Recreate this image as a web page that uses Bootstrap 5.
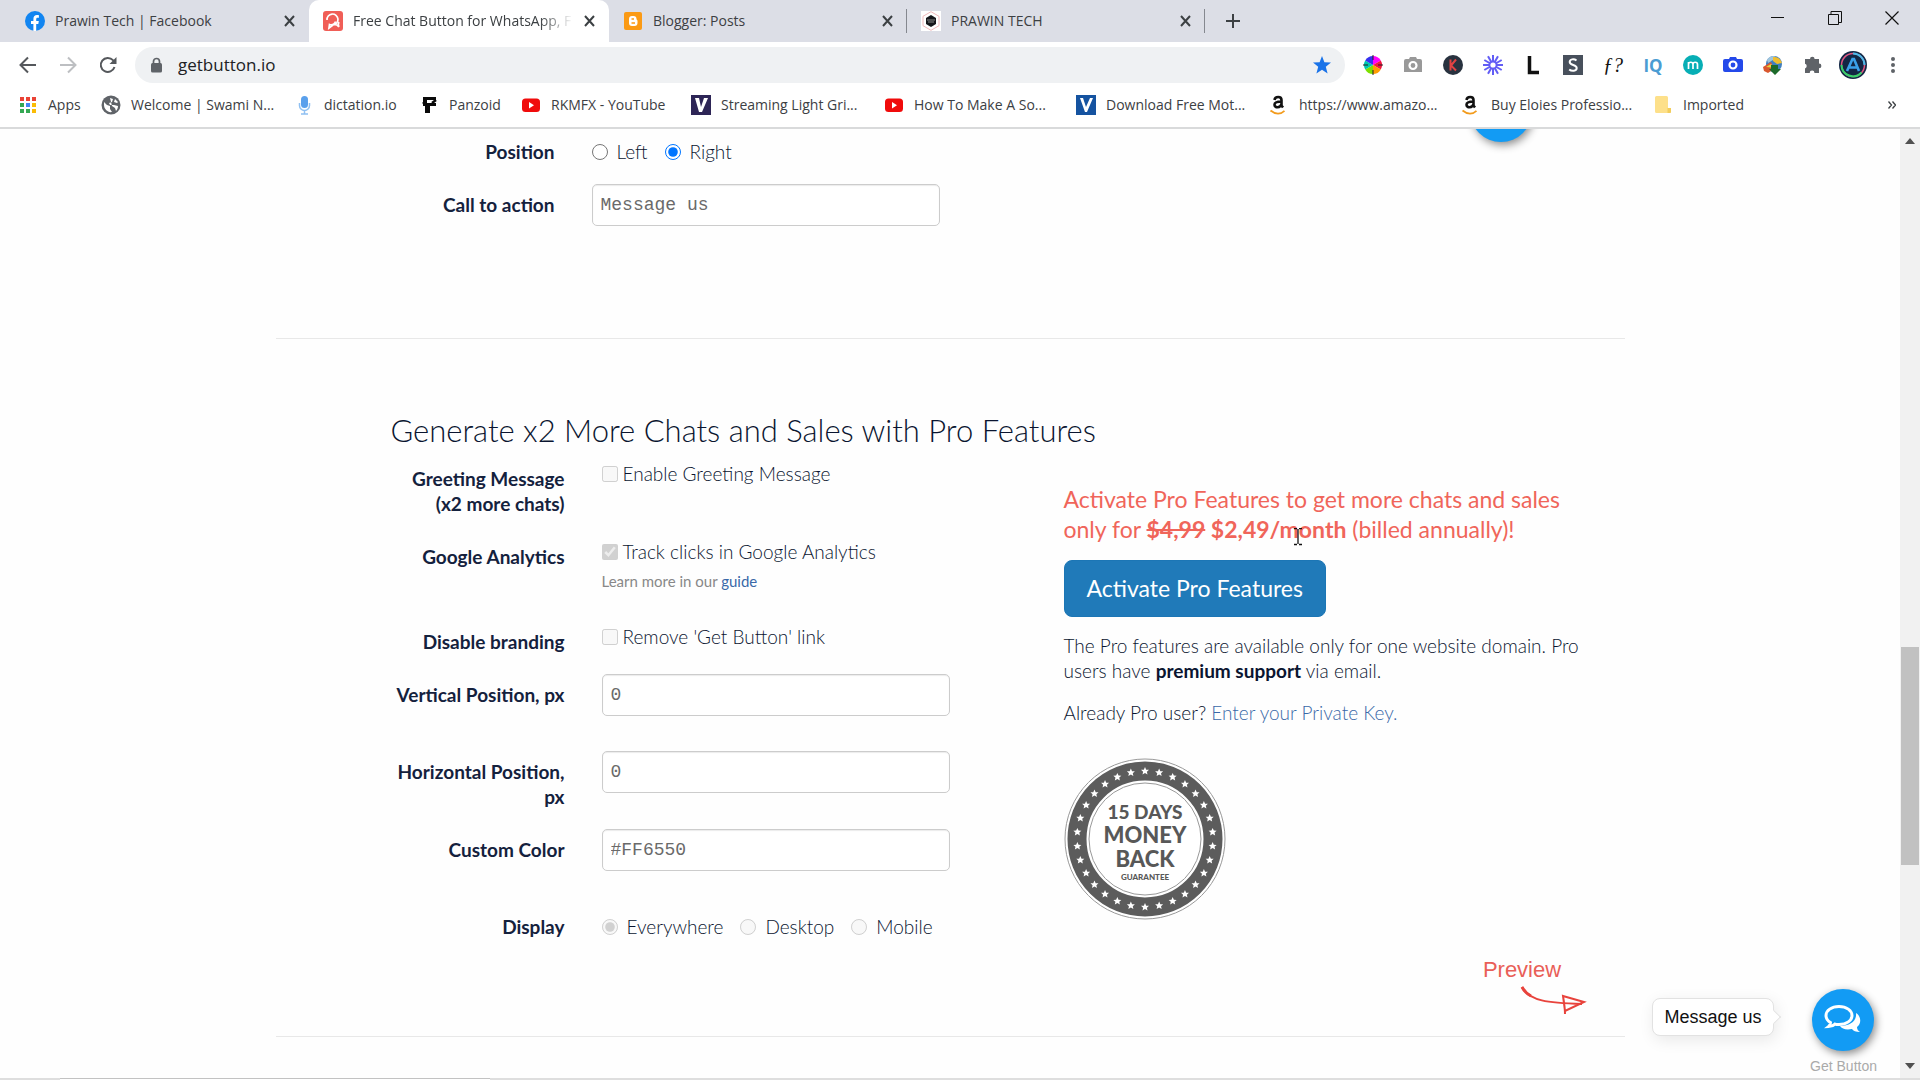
<!DOCTYPE html>
<html lang="en">
<head>
<meta charset="utf-8">
<meta name="viewport" content="width=device-width, initial-scale=1">
<title>Free Chat Button for WhatsApp</title>
<link href="https://cdn.jsdelivr.net/npm/bootstrap@5.3.0/dist/css/bootstrap.min.css" rel="stylesheet">
<style>
body{font-family:Lato,"Liberation Sans",sans-serif;font-size:19px;font-weight:300;line-height:25px;color:#0a1530;background:#fefefe}
svg{display:block;flex:none}
.browser{height:100vh;overflow:hidden}
.ui-font{font-family:"Open Sans","Noto Sans",sans-serif;font-size:14px;font-weight:400;line-height:20px;color:#3c4043}
.tabstrip{height:42px;background:#dcdee6;display:grid;grid-template-columns:309px 300px 298px 298px 56px 1fr auto}
.tabitem{gap:10px;padding:0 13px 0 14px;white-space:nowrap}
.tabitem.first{padding-left:25px}
.tabitem.current{background:#fff;border-radius:10px 10px 0 0}
.tabitem .ttl{flex:1;overflow:hidden;color:#3c4043}
.tabitem.current .ttl{-webkit-mask-image:linear-gradient(90deg,#000 85%,transparent)}
.split{background:linear-gradient(#85888f,#85888f) right center/1px 24px no-repeat}
.iconbtn{border:0;background:none;padding:0;display:flex;align-items:center;justify-content:center}
.winbtns .iconbtn{width:57px;height:36px}
.toolbar{height:44px;padding:5px 7px 3px 8px;background:#fff;display:grid;grid-template-columns:127px 1fr auto}
.navbtns .iconbtn{width:40px;height:36px}
.address{background:#eff1f3;border-radius:18px;padding:0 14px;height:36px;gap:15px}
.address input{border:0;background:none;font-size:17px;color:#202124;flex:1;outline:0;padding:0;min-width:0;font-family:inherit}
.exts{padding-left:8px}
.exts .iconbtn{width:40px;height:36px}
.bookmarks{height:41px;background:#fff;display:grid;grid-template-columns:83px 193px 125px 102px 170px 193px 192px 193px 192px 192px 1fr 24px;padding:0 16px 4px 18px;white-space:nowrap;align-items:center}
.bookmarks a{display:flex;align-items:center;gap:10px;color:#3c4043;text-decoration:none}
.bookmarks a svg{width:20px;height:20px}
.edge{height:2px;background:#d9dadb}
.viewport{flex:1;min-height:0;position:relative}
.scrollbar{width:20px;background:#f1f1f1}
.track{flex:1;padding:0 1px}
.before-thumb{flex:497}.thumb{flex:219;background:#c1c1c1}.after-thumb{flex:190}
.page-area{flex:1;min-width:0;position:relative;overflow:hidden}
.wrapbox{width:71%;min-width:1200px;margin:0 auto}
.rule{border:0;border-top:1px solid #e8e8e8;opacity:1;margin:0}
.top-form{padding:2px 0 0 104px;height:209px}
.pro{padding:73px 0 97px 114px}
.pro h2{font-size:31px;line-height:36px;font-weight:300;margin:0 0 10px;padding-left:1px;white-space:nowrap}
.frow{display:flex;gap:37px;margin-bottom:20px}
.frow .lab{width:175px;padding-top:8px;text-align:right;font-weight:700;flex:none;color:#14213d;white-space:nowrap}
.fieldbox{min-height:33px}
.fieldbox.tall{min-height:57px}
.fieldbox.noted{min-height:65px}
.frow input[type=text]{width:348px;height:42px;border:1px solid #ccc;border-radius:5px;padding:0 8px;font-family:"Liberation Mono",monospace;font-size:18px;line-height:25px;color:#6a6a6a;background:#fff;box-shadow:inset 0 1px 1px rgba(0,0,0,.08)}
.checkline{display:flex;align-items:center;gap:5px;padding-top:3px}
.checkline input,.radioline input{width:16px;height:16px;margin:0}
.radioline{display:flex;align-items:center;gap:17px;padding-top:8px}
.radioline label{display:flex;align-items:center;gap:9px}
.hint{font-size:15px;font-weight:400;line-height:20px;color:#888;padding-top:7px}
a.plain{color:#3a69a8;text-decoration:none}
.offer{padding-top:26px;margin-left:114px;width:520px;flex:none}
.offer .pitch{font-size:23px;font-weight:400;line-height:30px;color:#f0655a;margin-bottom:16px;white-space:nowrap}
.btn-pro{background:#207ab9;color:#fff;font-size:23px;line-height:31px;padding:12px 22px;border:1px solid #1c76b5;border-radius:8px}
.btn-pro:hover{background:#1b6ca5;color:#fff}
.offer p{margin:0 0 17px;white-space:nowrap}
.offer b{font-weight:700}
.seal{margin-top:32px}
.arial{font-family:"Liberation Sans",Arial,sans-serif;font-weight:400}
.preview{position:absolute;right:347px;bottom:61px;color:#e95f58;font-size:22px;line-height:26px;width:102px}
.preview svg{margin:2px 0 0 49px}
.bubble{position:absolute;right:146px;bottom:42px;width:122px;height:38px;border:1px solid #e2e2e2;border-radius:8px;background:#fff;color:#111;text-align:center;line-height:36px;font-size:18px;box-shadow:2px 4px 16px rgba(0,0,0,.09)}
.bubble::after{content:"";position:absolute;right:-6px;top:13px;width:10px;height:10px;background:#fff;border:1px solid #e2e2e2;border-left:0;border-bottom:0;transform:rotate(45deg)}
.chat{position:absolute;right:46px;bottom:27px;width:62px;height:62px;border-radius:50%;background:#129bf4;border:0;padding:0;display:flex;align-items:center;justify-content:center;box-shadow:2px 3px 8px rgba(0,0,0,.45)}
.brand{position:absolute;right:43px;bottom:2px;color:#aaa;font-size:14px;line-height:20px;text-decoration:none}
.topball{position:absolute;right:368px;top:-49px;width:62px;height:62px;border-radius:50%;background:#129bf4;box-shadow:2px 3px 8px rgba(0,0,0,.45)}
.pointer{position:absolute;left:1292px;top:399px}
.foot{height:2px;background:#dedede}
.foot div{width:430px;margin-left:60px;height:2px;border-top:1px solid #c2c2c2;background:#fff}
.glyph-f{font:italic 20px "Liberation Serif",serif;color:#111}
.glyph-iq{font:700 17px "Open Sans",sans-serif;color:#4b9cd3}
</style>
<script src="https://cdn.jsdelivr.net/npm/bootstrap@5.3.0/dist/js/bootstrap.bundle.min.js"></script>
</head>
<body>
<div class="browser d-flex flex-column">
<header class="ui-font">
 <div class="tabstrip">
  <div class="tabitem first d-flex align-items-center"><svg width="20" height="20" viewBox="0 0 20 20"><circle cx="10" cy="10" r="10" fill="#1285f1"/><path d="M8.400 20v-7H6v-3h2.400V7.900c0-2.500 1.400-3.800 3.600-3.800 1 0 1.900.2 1.900.2v2.500h-1.200c-1.200 0-1.500.7-1.500 1.500V10h2.600l-.5 3h-2.100v7z" fill="#fff"/></svg><span class="ttl">Prawin Tech | Facebook</span><button class="iconbtn" aria-label="Close tab"><svg width="13" height="12" viewBox="0 0 13 12"><path d="M2 1l9 10M11 1L2 11" stroke="#3c4043" stroke-width="2"/></svg></button></div>
  <div class="tabitem current d-flex align-items-center"><svg width="20" height="20" viewBox="0 0 20 20"><rect width="20" height="20" rx="3" fill="#f05e57"/><path d="M4 9a5.500 5.500 0 1 1 6 5l-4 3 .5-3.500c2.500 1 6-.5 5.800-3M11 13.500c2 0 3.800.5 5 2.500-1-2-1-3.500 0-5" fill="none" stroke="#fff" stroke-width="1.700"/></svg><span class="ttl">Free Chat Button for WhatsApp, F</span><button class="iconbtn" aria-label="Close tab"><svg width="13" height="12" viewBox="0 0 13 12"><path d="M2 1l9 10M11 1L2 11" stroke="#3c4043" stroke-width="2"/></svg></button></div>
  <div class="tabitem split d-flex align-items-center"><svg width="20" height="20" viewBox="0 0 20 20"><rect x="1" y="1" width="18" height="18" rx="2" fill="#fb9a14"/><path d="M6 8a3 3 0 0 1 3-3h1.500a3 3 0 0 1 3 3c0 1 1 .8 1 2v2a3 3 0 0 1-3 3H9a3 3 0 0 1-3-3z" fill="#fff"/><path d="M8.500 8H11M8.500 12h3.500" stroke="#fb9a14" stroke-width="1.400"/></svg><span class="ttl">Blogger: Posts</span><button class="iconbtn" aria-label="Close tab"><svg width="13" height="12" viewBox="0 0 13 12"><path d="M2 1l9 10M11 1L2 11" stroke="#3c4043" stroke-width="2"/></svg></button></div>
  <div class="tabitem split d-flex align-items-center"><svg width="20" height="20" viewBox="0 0 20 20"><rect width="20" height="20" fill="#fff"/><path d="M10 .7l8 4.600v9.400l-8 4.600-8-4.600V5.300z" fill="none" stroke="#f0b9bb"/><path d="M10 4l5 3v6l-5 3-5-3V7z" fill="#15171b"/><path d="M6 9h8M7 11h6" stroke="#888"/></svg><span class="ttl">PRAWIN TECH</span><button class="iconbtn" aria-label="Close tab"><svg width="13" height="12" viewBox="0 0 13 12"><path d="M2 1l9 10M11 1L2 11" stroke="#3c4043" stroke-width="2"/></svg></button></div>
  <button class="iconbtn" aria-label="New tab"><svg width="16" height="16" viewBox="0 0 16 16"><path d="M8 1v14M1 8h14" stroke="#3c4043" stroke-width="2"/></svg></button>
  <span></span>
  <div class="winbtns d-flex">
   <button class="iconbtn" aria-label="Minimize"><svg width="14" height="14" viewBox="0 0 14 14"><path d="M0 6.500h13" stroke="#111" stroke-width="1"/></svg></button>
   <button class="iconbtn" aria-label="Restore"><svg width="14" height="14" viewBox="0 0 14 14"><path d="M.5 3.500h10v10H.5zM3 3V.5h10.500v11H11" fill="none" stroke="#111"/></svg></button>
   <button class="iconbtn" aria-label="Close"><svg width="14" height="14" viewBox="0 0 14 14"><path d="M.5.5l13 13M13.500.5l-13 13" stroke="#111" stroke-width="1.200"/></svg></button>
  </div>
 </div>
 <div class="toolbar">
  <div class="navbtns d-flex">
   <button class="iconbtn" aria-label="Back"><svg width="18" height="18" viewBox="0 0 18 18"><path d="M17 9H2M9 1.500L1.500 9 9 16.500" fill="none" stroke="#55585c" stroke-width="2"/></svg></button>
   <button class="iconbtn" aria-label="Forward"><svg width="18" height="18" viewBox="0 0 18 18"><path d="M1 9h15M9 1.500L16.500 9 9 16.500" fill="none" stroke="#bdbfc2" stroke-width="2"/></svg></button>
   <button class="iconbtn" aria-label="Reload"><svg width="18" height="18" viewBox="0 0 18 18"><path d="M15.500 11A7 7 0 1 1 14 4.200L16 6" fill="none" stroke="#55585c" stroke-width="2"/><path d="M17.500 1v7h-7z" fill="#55585c"/></svg></button>
  </div>
  <div class="address d-flex align-items-center"><svg width="14" height="16" viewBox="0 0 14 16"><rect x="2" y="6" width="11" height="9.500" rx="1.500" fill="#5f6368"/><path d="M4.500 7V4.500a3 3 0 0 1 6 0V7" fill="none" stroke="#5f6368" stroke-width="1.700"/></svg><input type="text" aria-label="Address" value="getbutton.io"><svg width="18" height="18" viewBox="0 0 18 18"><path d="M9 0l2.400 6.300 6.600.3-5.200 4.200L14.600 17.500 9 13.700 3.400 17.500l1.800-6.700L0 6.600l6.600-.3z" fill="#1a73e8"/></svg></div>
  <div class="exts d-flex">
   <button class="iconbtn" aria-label="Color picker"><svg width="20" height="20" viewBox="0 0 20 20"><path d="M10 10L10 1A9 9 0 0 1 17.800 5.500z" fill="#f0f"/><path d="M10 10L17.800 5.500A9 9 0 0 1 17.800 14.500z" fill="#f01840"/><path d="M10 10L17.800 14.500A9 9 0 0 1 10 19z" fill="#ff9d00"/><path d="M10 10V19A9 9 0 0 1 2.200 14.500z" fill="#7de000"/><path d="M10 10L2.200 14.500A9 9 0 0 1 2.200 5.500z" fill="#00c8b0"/><path d="M10 10L2.200 5.500A9 9 0 0 1 10 1z" fill="#3530f0"/><path d="M10 0v5M10 15v5M0 10h5M15 10h5" stroke="#222"/></svg></button>
   <button class="iconbtn" aria-label="Screenshot"><svg width="20" height="20" viewBox="0 0 20 20"><path d="M3 4h3l1-2h6l1 2h3a2 2 0 0 1 2 2v11H1V6a2 2 0 0 1 2-2z" fill="#999"/><circle cx="10" cy="10.500" r="3.500" fill="none" stroke="#fff" stroke-width="2.200"/></svg></button>
   <button class="iconbtn" aria-label="K"><svg width="20" height="20" viewBox="0 0 20 20"><circle cx="10" cy="10" r="10" fill="#28323f"/><path d="M7.500 4.500v11M13 4.500L8 10.500l5 5" fill="none" stroke="#e04343" stroke-width="2"/></svg></button>
   <button class="iconbtn" aria-label="Loom"><svg width="20" height="20" viewBox="0 0 20 20"><g stroke="#625df5" stroke-width="2"><path d="M10 0v20M0 10h20M1.300 5l17.400 10M1.300 15l17.400-10M5 1.300l10 17.400M15 1.300L5 18.700"/></g><circle cx="10" cy="10" r="4.500" fill="#625df5"/><circle cx="10" cy="10" r="2.600" fill="#fff"/></svg></button>
   <button class="iconbtn" aria-label="L"><svg width="20" height="20" viewBox="0 0 20 20"><path d="M6.500 1v16.500H16" fill="none" stroke="#111" stroke-width="3.500"/></svg></button>
   <button class="iconbtn" aria-label="S"><svg width="20" height="20" viewBox="0 0 20 20"><rect width="20" height="20" fill="#48505c"/><path d="M13.500 5.500C11 3.500 6.700 4 6.700 7c0 3.500 7 2.500 7 6 0 3.300-5 3.500-7.500 1.500" fill="none" stroke="#fff" stroke-width="2"/></svg></button>
   <button class="iconbtn" aria-label="WhatFont"><i class="glyph-f">ƒ?</i></button>
   <button class="iconbtn" aria-label="IQ"><b class="glyph-iq">IQ</b></button>
   <button class="iconbtn" aria-label="m"><svg width="20" height="20" viewBox="0 0 20 20"><circle cx="10" cy="10" r="10" fill="#07aeb5"/><path d="M5.500 14V7M5.500 9.500c0-3 4.500-3 4.500 0V14M10 9.500c0-3 4.500-3 4.500 0V14" fill="none" stroke="#fff" stroke-width="1.700"/></svg></button>
   <button class="iconbtn" aria-label="Capture"><svg width="20" height="20" viewBox="0 0 20 20"><path d="M2 4h4l1-2h6l1 2h4a2 2 0 0 1 2 2v9a2 2 0 0 1-2 2H2a2 2 0 0 1-2-2V6a2 2 0 0 1 2-2z" fill="#2449ea"/><circle cx="10" cy="10" r="3.500" fill="none" stroke="#fff" stroke-width="2.200"/></svg></button>
   <button class="iconbtn" aria-label="Download manager"><svg width="20" height="20" viewBox="0 0 20 20"><circle cx="11" cy="9" r="8" fill="#3f7fc0"/><path d="M4 5a8 8 0 0 1 8-4l-2 4-5 3z" fill="#9fc4dc"/><path d="M10 2a8 8 0 0 1 9 6l-5 1-4-3z" fill="#f0bd2d"/><path d="M0 12l8-5 3 7-6 4-4-2z" fill="#d9572e"/><path d="M3 12l5-3 4 4z" fill="#e6d33e"/><path d="M8 10h7v4h3l-6 6-6-6h2z" fill="#1d6a2a"/></svg></button>
   <button class="iconbtn" aria-label="Extensions"><svg width="20" height="20" viewBox="0 0 20 20"><path d="M7 4a2.300 2.300 0 0 1 4.600 0H16v4.500a2.400 2.400 0 0 1 0 4.800V18h-4.500a2.400 2.400 0 0 0-4.800 0H2v-4.600a2.400 2.400 0 0 0 0-4.600V4z" fill="#5f6368"/></svg></button>
   <button class="iconbtn" aria-label="Profile"><svg width="28" height="28" viewBox="0 0 28 28"><circle cx="14" cy="14" r="14" fill="#122644"/><circle cx="14" cy="14" r="11.500" fill="none" stroke="#e05680" stroke-width="1.500"/><path d="M2.500 14a11.500 11.500 0 0 0 20 7.500" fill="none" stroke="#35d06a" stroke-width="2"/><path d="M14 2.500A11.500 11.500 0 0 1 25.500 14" fill="none" stroke="#4db8e8" stroke-width="2"/><path d="M8 20l5.500-12h1.500L20 20M10 16.500h9" fill="none" stroke="#3aa0ea" stroke-width="2.600"/></svg></button>
   <button class="iconbtn" aria-label="Menu"><svg width="6" height="18" viewBox="0 0 6 18"><g fill="#5f6368"><circle cx="3" cy="3" r="2"/><circle cx="3" cy="9" r="2"/><circle cx="3" cy="15" r="2"/></g></svg></button>
  </div>
 </div>
 <nav class="bookmarks" aria-label="Bookmarks">
  <a href="#"><svg viewBox="0 0 20 20"><path fill="#ea4335" d="M2 2h4v4H2zM8 2h4v4H8zM14 2h4v4h-4z"/><path fill="#34a853" d="M2 8h4v4H2zM2 14h4v4H2zM8 14h4v4H8z"/><path fill="#4285f4" d="M8 8h4v4H8z"/><path fill="#fbbc05" d="M14 8h4v4h-4zM14 14h4v4h-4z"/></svg>Apps</a>
  <a href="#"><svg viewBox="0 0 20 20"><circle cx="10" cy="10" r="9.500" fill="#5f6368"/><path d="M3 7l3 3 3 1v3l2 3c-4 1-8-3-8-7zM9 3l3 1-1 3-3 1 1 2h4l4 1c0 2-1 4-2 5l-1-3-3-2M14 4l-1 3 3 1 1-1z" fill="#fff"/></svg>Welcome | Swami N...</a>
  <a href="#"><svg viewBox="0 0 20 20"><rect x="7" y="1" width="7" height="12" rx="3.500" fill="#5aa0ec"/><path d="M5.500 8v2.500a5 5 0 0 0 10 0V8M10.500 15v3.500M7 19h7" stroke="#8fc0f2" stroke-width="1.500" fill="none"/></svg>dictation.io</a>
  <a href="#"><svg viewBox="0 0 20 20"><path d="M4 2h13v3H8v3h9v3h-6v7H6v-7H4z" fill="#0a0a0a"/><path d="M4 7l4 4M17 5l-4 3" stroke="#0a0a0a" stroke-width="2.500"/></svg>Panzoid</a>
  <a href="#"><svg viewBox="0 0 20 20"><rect x="1" y="3.500" width="18" height="13.500" rx="3.500" fill="#f00b0b"/><path d="M8 7l5 3.200-5 3.200z" fill="#fff"/></svg>RKMFX - YouTube</a>
  <a href="#"><svg viewBox="0 0 20 20"><rect width="20" height="20" fill="#2d2556"/><path d="M4 3h4l2 9 3-9h4l-6 14H8z" fill="#fff"/></svg>Streaming Light Gri...</a>
  <a href="#"><svg viewBox="0 0 20 20"><rect x="1" y="3.500" width="18" height="13.500" rx="3.500" fill="#f00b0b"/><path d="M8 7l5 3.200-5 3.200z" fill="#fff"/></svg>How To Make A So...</a>
  <a href="#"><svg viewBox="0 0 20 20"><rect width="20" height="20" fill="#1553a0"/><path d="M4 3h3l3 9 4-9h3l-6 14H9z" fill="#fff"/></svg>Download Free Mot...</a>
  <a href="#"><svg viewBox="0 0 20 20"><path d="M5.500 5c.5-4 7-4 7 0v6.500M12.500 6.500c-4 0-7 .5-7 3.200 0 3.500 6 3.500 7-.7M12 10l2 2.500" fill="none" stroke="#111" stroke-width="2.600"/><path d="M1.500 15.500c5 4 10 4 14 .3" fill="none" stroke="#f29b1d" stroke-width="1.700"/></svg>https://www.amazo...</a>
  <a href="#"><svg viewBox="0 0 20 20"><path d="M5.500 5c.5-4 7-4 7 0v6.500M12.500 6.500c-4 0-7 .5-7 3.200 0 3.500 6 3.500 7-.7M12 10l2 2.500" fill="none" stroke="#111" stroke-width="2.600"/><path d="M1.500 15.500c5 4 10 4 14 .3" fill="none" stroke="#f29b1d" stroke-width="1.700"/></svg>Buy Eloies Professio...</a>
  <a href="#"><svg viewBox="0 0 20 20"><path d="M2 2.500A1.500 1.500 0 0 1 3.500 1h10A1.500 1.500 0 0 1 15 2.500V13h2.500v5H3.500A1.500 1.500 0 0 1 2 16.500z" fill="#fde08a"/><path d="M14.500 13v5H17a1 1 0 0 0 1-1v-4z" fill="#f2cd5c"/></svg>Imported</a>
  <button class="iconbtn" aria-label="More bookmarks"><svg width="8" height="8" viewBox="0 0 8 8"><path d="M.5.500L3.500 4 .5 7.500M4.500.500L7.500 4l-3 3.500" fill="none" stroke="#3c4043" stroke-width="1.300"/></svg></button>
 </nav>
 <div class="edge"></div>
</header>
<div class="viewport d-flex">
 <main class="page-area">
  <div class="wrapbox">
   <form class="top-form">
    <div class="frow"><span class="lab">Position</span><div class="radioline"><label><input type="radio" name="pos"> Left</label><label><input type="radio" name="pos" checked> Right</label></div></div>
    <div class="frow"><label class="lab" for="cta">Call to action</label><div class="fieldbox tall"><input type="text" id="cta" value="Message us"></div></div>
   </form>
   <hr class="rule">
   <section class="pro">
    <h2>Generate x2 More Chats and Sales with Pro Features</h2>
    <div class="d-flex align-items-start">
    <form>
     <div class="frow"><span class="lab">Greeting Message<br>(x2 more chats)</span><div class="fieldbox"><label class="checkline"><input type="checkbox" disabled> Enable Greeting Message</label></div></div>
     <div class="frow"><span class="lab">Google Analytics</span><div class="fieldbox noted"><label class="checkline"><input type="checkbox" checked disabled> Track clicks in Google Analytics</label><div class="hint">Learn more in our <a class="plain" href="#">guide</a></div></div></div>
     <div class="frow"><span class="lab">Disable branding</span><div class="fieldbox"><label class="checkline"><input type="checkbox" disabled> Remove 'Get Button' link</label></div></div>
     <div class="frow"><label class="lab" for="vp">Vertical Position, px</label><div class="fieldbox tall"><input type="text" id="vp" value="0"></div></div>
     <div class="frow"><label class="lab" for="hp">Horizontal Position,<br>px</label><div class="fieldbox tall"><input type="text" id="hp" value="0"></div></div>
     <div class="frow"><label class="lab" for="cc">Custom Color</label><div class="fieldbox tall"><input type="text" id="cc" value="#FF6550"></div></div>
     <div class="frow mb-0"><span class="lab">Display</span><div class="radioline"><label><input type="radio" name="disp" checked disabled> Everywhere</label><label><input type="radio" name="disp" disabled> Desktop</label><label><input type="radio" name="disp" disabled> Mobile</label></div></div>
    </form>
    <div class="offer">
     <div class="pitch">Activate Pro Features to get more chats and sales<br>only for <b><s>$4,99</s> $2,49/month</b> (billed annually)!</div>
     <button class="btn btn-pro" type="button">Activate Pro Features</button>
     <p class="pt-3">The Pro features are available only for one website domain. Pro<br>users have <b>premium support</b> via email.</p>
     <p>Already Pro user? <a class="plain" href="#">Enter your Private Key.</a></p>
     <svg class="seal" width="162" height="164" viewBox="-81 -82 162 164" role="img" aria-label="15 days money back guarantee"><circle r="80" fill="#fff" stroke="#999"/><circle r="68" fill="none" stroke="#5c5c5c" stroke-width="19"/><circle r="56" fill="none" stroke="#999"/><g id="stars" fill="#fff"></g><g fill="#585858" text-anchor="middle" font-weight="900"><text y="-20" font-size="19">15 DAYS</text><text y="4" font-size="22">MONEY</text><text y="28" font-size="22">BACK</text><text y="41" font-size="8">GUARANTEE</text></g></svg>
    </div>
    </div>
   </section>
   <hr class="rule">
  </div>
  <div class="topball"></div>
 </main>
 <div class="scrollbar d-flex flex-column align-items-stretch">
  <button class="iconbtn py-2" aria-label="Scroll up"><svg width="10" height="8" viewBox="0 0 10 8"><path d="M0 7l5-6 5 6z" fill="#505050"/></svg></button>
  <div class="track d-flex flex-column"><div class="before-thumb"></div><div class="thumb"></div><div class="after-thumb"></div></div>
  <button class="iconbtn py-2" aria-label="Scroll down"><svg width="10" height="8" viewBox="0 0 10 8"><path d="M0 1l5 6 5-6z" fill="#505050"/></svg></button>
 </div>
 <div class="preview arial text-center">Preview<svg width="68" height="32" viewBox="0 0 68 32"><path d="M2 2c7 14 26 16 60 17" fill="none" stroke="#e8433c" stroke-width="2"/><path d="M2 2c2 4 5 7 9 9" fill="none" stroke="#e8433c" stroke-width="3"/><path d="M43 11l21 6-19 9zM43 11c1 6 2 12 2 18" fill="none" stroke="#e8433c" stroke-width="2"/></svg></div>
 <div class="bubble arial">Message us</div>
 <button class="chat" aria-label="Chat"><svg width="38" height="32" viewBox="0 0 38 32"><path d="M32 9c6 4 5 11 1 14 0 2 1 4 3 5-4 0-7-1-8-3-6 1-10 0-12-3 10 0 17-5 16-13z" fill="#fff"/><path d="M15 2.500c7.500 0 13 4 13 9s-5.500 9-13 9c-1.500 0-3 0-4-.4-1.500 1.400-4 2.400-6.500 2.500 1.500-1.200 2-2.500 2-4-2.800-1.600-4.500-4.200-4.500-7.100 0-5 5.500-9 13-9z" fill="#129bf4" stroke="#fff" stroke-width="3"/></svg></button>
 <a class="brand arial" href="#">Get Button</a>
 <svg class="pointer" width="12" height="18" viewBox="0 0 12 18"><path d="M2 .5h3M7 .5h3M2 16.500h3M7 16.500h3M6 1v15" stroke="#111" stroke-width="1.300"/></svg>
</div>
<div class="foot"><div></div></div>
</div>
<script>
// ring of 30 five-pointed stars
const ring=document.getElementById('stars');
for(let i=0;i<30;i++){const p=document.createElementNS('http://www.w3.org/2000/svg','path');
p.setAttribute('d','M0-4L1.200-1.300 4-1.200 1.900.7 2.500 3.500 0 2-2.500 3.500-1.900.7-4-1.200-1.200-1.300z');
const a=i*12*Math.PI/180;p.setAttribute('transform',`translate(${68*Math.sin(a)} ${-68*Math.cos(a)})`);ring.appendChild(p);}
</script>
</body>
</html>
